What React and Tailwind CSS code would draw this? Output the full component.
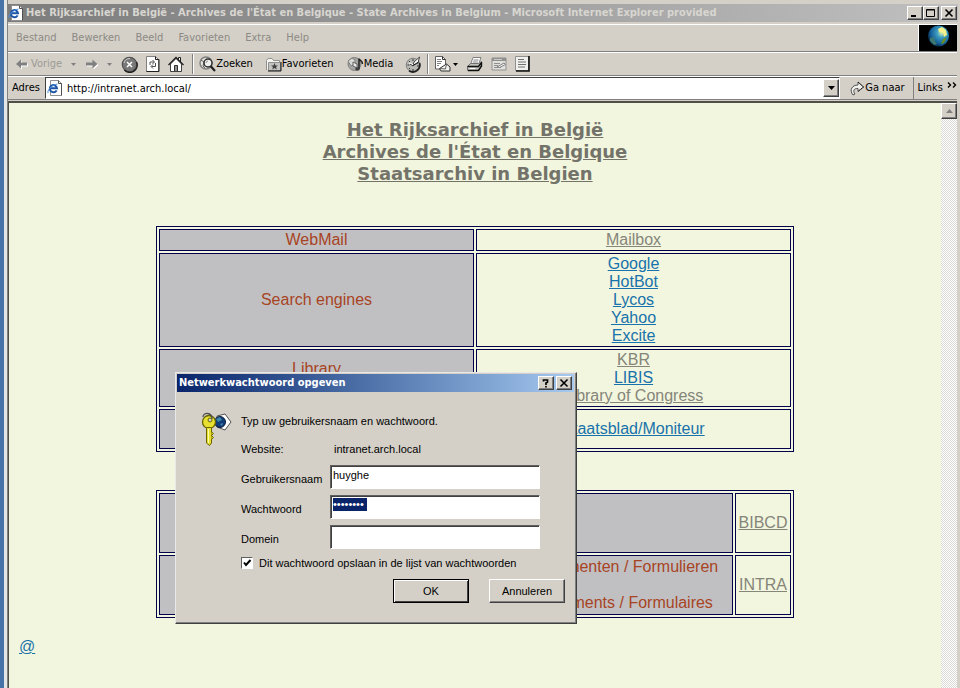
const uiFont = "font-['DejaVu_Sans_Condensed','DejaVu_Sans',sans-serif]";

function PageIcon() {
  return (
    <svg width="16" height="16" viewBox="0 0 16 16" className="shrink-0" aria-hidden="true">
      <path d="M3.500 .5h8l3 3v12h-11z" fill="#fff" stroke="#909090" />
      <path d="M11.500 .5v3h3v12" fill="none" stroke="#505050" />
      <path d="M9.600 10.400A3.600 3.600 0 1 1 10 8.300H4" fill="none" stroke="#1c55a8" strokeWidth="2" />
      <path d="M1 13C0 11 4 5 10.500 4" fill="none" stroke="#4a8fd8" />
    </svg>
  );
}

function BackIcon() {
  return (
    <svg width="14" height="12" viewBox="0 0 14 12" aria-hidden="true">
      <path d="M2 7l5-4.500v3h6v3H7v3z" fill="#fff" />
      <path d="M1 6l5-4.500v3h6v3H6v3z" fill="#808080" />
    </svg>
  );
}

function ForwardIcon() {
  return (
    <svg width="14" height="12" viewBox="0 0 14 12" aria-hidden="true">
      <path d="M13.500 7l-5-4.500V5.500H2v3h6.500v3z" fill="#fff" />
      <path d="M12.500 6l-5-4.500V4.500H1v3h6.500v3z" fill="#808080" />
    </svg>
  );
}

function Caret({ color = "#000" }) {
  return (
    <svg width="5" height="3" viewBox="0 0 5 3" aria-hidden="true">
      <path d="M0 0h5L2.500 3z" fill={color} />
    </svg>
  );
}

function StopIcon() {
  return (
    <svg width="17" height="17" viewBox="0 0 17 17" aria-hidden="true">
      <circle cx="8.500" cy="8.500" r="7.200" fill="#787878" stroke="#505050" strokeWidth="1.200" />
      <path d="M15.500 6A7.300 7.300 0 0 1 3.500 14" stroke="#202020" strokeWidth="1.500" fill="none" />
      <path d="M3 7A6 6 0 0 1 9 2.500" stroke="#d0d0d0" fill="none" />
      <path d="M6 6l5 5M11 6l-5 5" stroke="#fff" strokeWidth="1.500" />
    </svg>
  );
}

function RefreshIcon() {
  return (
    <svg width="14" height="16" viewBox="0 0 14 16" aria-hidden="true">
      <path d="M.5 .5h9l3 3v12H.5z" fill="#fff" stroke="#808080" />
      <path d="M9.500 .5v3h3.500v12H.5" fill="none" stroke="#202020" />
      <path d="M4 9V6h4M6.500 4L8.500 6l-2 2M9.500 7v3.500H5.500M7 8.500l-2 2 2 2" fill="none" stroke="#505050" />
    </svg>
  );
}

function HomeIcon() {
  return (
    <svg width="16" height="16" viewBox="0 0 16 16" aria-hidden="true">
      <path d="M10.500 4V1.500h2V6" fill="#fff" stroke="#202020" />
      <path d="M2.500 8v7.500h11V8L8 2.500z" fill="#fff" stroke="#404040" />
      <path d="M.5 9L8 1.500 15.500 9" fill="none" stroke="#202020" strokeWidth="1.300" />
      <path d="M6.500 15V9.500h3V15" fill="#909090" stroke="#303030" />
    </svg>
  );
}

function SearchIcon() {
  return (
    <svg width="17" height="16" viewBox="0 0 17 16" aria-hidden="true">
      <circle cx="7" cy="7" r="6" fill="#e4e4e0" stroke="#808080" strokeWidth="1.500" />
      <path d="M2 4l3 2-1 4 2 2" fill="none" stroke="#606060" />
      <circle cx="9" cy="7" r="4" fill="#f0f0ee" stroke="#303030" strokeWidth="1.500" />
      <path d="M7 7a2 2 0 0 1 2-2" fill="none" stroke="#909090" />
      <path d="M11.500 10l4.500 5" stroke="#202020" strokeWidth="2.200" />
    </svg>
  );
}

function FavoritesIcon() {
  return (
    <svg width="16" height="15" viewBox="0 0 16 15" aria-hidden="true">
      <path d="M.5 13V3.500l1.500-2h4l1.500 2h6V6" fill="#f4f4f0" stroke="#909090" />
      <path d="M2.500 5.500h12v8h-12z" fill="#c4c4c0" stroke="#909090" />
      <path d="M15 5v9H2" fill="none" stroke="#101010" />
      <path d="M8.500 6l1 2.400H12l-2 1.500.8 2.600-2.300-1.500-2.300 1.500.8-2.600-2-1.500h2.500z" fill="#404040" />
    </svg>
  );
}

function MediaIcon() {
  return (
    <svg width="17" height="16" viewBox="0 0 17 16" aria-hidden="true">
      <circle cx="7.500" cy="8" r="6.500" fill="#a4a4a0" stroke="#808080" />
      <path d="M1 5l4-3 3 2v4l-4 2z" fill="#d8d8d4" stroke="#808080" />
      <path d="M6 6l4 2v4l-4-2z" fill="#ececec" stroke="#606060" />
      <path d="M12 13V2.500c0 2 3.500 1.500 3.500 5.500" fill="none" stroke="#202020" strokeWidth="1.500" />
      <ellipse cx="10.500" cy="13" rx="2.300" ry="1.800" fill="#404040" />
    </svg>
  );
}

function HistoryIcon() {
  return (
    <svg width="17" height="17" viewBox="0 0 17 17" aria-hidden="true">
      <circle cx="8" cy="9" r="6.800" fill="#b8b8b4" stroke="#808080" />
      <path d="M14.500 7A7 7 0 0 1 4 14.800" stroke="#202020" strokeWidth="1.800" fill="none" />
      <path d="M8 3v2M2.500 9h2M8 13v2M12 10h2M4 5l1 1M4 13l1-1" stroke="#303030" />
      <path d="M8 9.500l1-3.500 5.500-5-1.500 6z" fill="#fff" stroke="#404040" />
      <path d="M8 9.500L4.500 7" stroke="#fff" strokeWidth="2" />
      <path d="M8 9.500l5.500-3.500M8 10L5 8" stroke="#202020" fill="none" />
    </svg>
  );
}

function MailIcon() {
  return (
    <svg width="17" height="16" viewBox="0 0 17 16" aria-hidden="true">
      <path d="M1.500 .5h7l3 3v9.500h-10z" fill="#fff" stroke="#606060" />
      <path d="M8.500 .5v3h3" fill="none" stroke="#303030" />
      <path d="M3 3.500h4M3 5.500h5M3 7.500h4M3 9.500h2" stroke="#808080" />
      <path d="M5.500 12.500l7-4.500 3.500 3v4h-9z" fill="#f4f4f0" stroke="#303030" />
      <path d="M5.500 12.500l6 .5 1-5" fill="none" stroke="#606060" />
    </svg>
  );
}

function PrintIcon() {
  return (
    <svg width="17" height="15" viewBox="0 0 17 15" aria-hidden="true">
      <path d="M4.500 7.500l2.500-7h8l-2.500 7z" fill="#fff" stroke="#808080" />
      <path d="M7.500 3h5M6.800 5h5" stroke="#808080" />
      <path d="M1.500 9.500l3-3h8l3-2v4l-3 5h-11z" fill="#c0c0bc" stroke="#707070" />
      <path d="M1.500 9.500h11l3-4M12.500 13.500l3-4.500V5M2 13.500h10.500" fill="none" stroke="#101010" strokeWidth="1.400" />
      <path d="M3.500 11.500h6" stroke="#fff" />
    </svg>
  );
}

function EditIcon() {
  return (
    <svg width="16" height="14" viewBox="0 0 16 14" aria-hidden="true">
      <path d="M1 1h14v12H1z" fill="#e0e0dc" stroke="#909090" />
      <path d="M1 1h14v3H1z" fill="#909090" />
      <path d="M3 2.500h8" stroke="#c8c8c4" />
      <path d="M3 6.500h6M3 8.500h4M3 10.500h7" stroke="#909090" />
      <path d="M6 10l7-4 1.500 1.500-6 3z" fill="#f4f4f4" stroke="#808080" />
    </svg>
  );
}

function DiscussIcon() {
  return (
    <svg width="15" height="16" viewBox="0 0 15 16" aria-hidden="true">
      <path d="M.5 .5h13v14H.5z" fill="#f0f0ec" stroke="#909090" />
      <path d="M14 0v15H1" fill="none" stroke="#101010" strokeWidth="1.600" />
      <path d="M3 3.500h6M3 6h8M3 8.500h8M3 11h7" stroke="#707070" />
    </svg>
  );
}

function GoIcon() {
  return (
    <svg width="15" height="15" viewBox="0 0 15 15" aria-hidden="true">
      <path d="M3 14C-1 9 2 4 8 4V1l5.500 5L8 10.500V7.500C4 7 2.500 10 5 13z" fill="#f0f0ec" stroke="#505050" />
      <path d="M8 1l5.500 5L8 10.500" fill="none" stroke="#101010" strokeDasharray="2 1" />
    </svg>
  );
}

function GlobeLogo() {
  return (
    <svg width="38" height="26" viewBox="0 0 38 26" aria-hidden="true">
      <defs>
        <radialGradient id="globe" cx=".65" cy=".35" r=".75">
          <stop offset="0" stopColor="#d8f0b0" />
          <stop offset=".3" stopColor="#3c9cc0" />
          <stop offset=".7" stopColor="#145c98" />
          <stop offset="1" stopColor="#041828" />
        </radialGradient>
      </defs>
      <path d="M0 0h38v26H0z" fill="#000" />
      <circle cx="19.500" cy="11" r="10.500" fill="url(#globe)" />
      <path d="M19 4l4-2 4 3 1 5-3 2-1-4-4-1z" fill="#f4f08c" />
      <path d="M11 13l4-1 1 4 2 3-3 1-4-4z" fill="#3c7870" />
      <path d="M24 14l4-2-3 6-3 1z" fill="#6c8c28" />
    </svg>
  );
}

function KeyIcon() {
  return (
    <svg width="32" height="36" viewBox="0 0 32 36" className="shrink-0" aria-hidden="true">
      <path d="M16 4l8-2 6 8-6 8-8-3z" fill="#fff" stroke="#505050" />
      <circle cx="19" cy="10" r="5.500" fill="#123c78" stroke="#0c1c3c" />
      <path d="M15 7l4-2 2 3-4 2zM19 12l3-1-1 3z" fill="#3c88a8" />
      <circle cx="8" cy="10" r="6.500" fill="#e8e030" stroke="#686400" strokeWidth="1.300" />
      <path d="M5.500 15.500h5V31l-2 2.500-3-2.500z" fill="#e8e030" stroke="#686400" />
      <path d="M10.500 20l2 1.500-2 2 2 2-2 2" fill="#e8e030" stroke="#686400" />
      <path d="M7.500 17v14" stroke="#fffcb0" />
      <circle cx="9" cy="8" r="2" fill="#d4d0c8" stroke="#686400" />
      <path d="M2 5c0-5 9-5 9 2" fill="none" stroke="#505050" strokeWidth="1.300" />
    </svg>
  );
}

const raised =
  "border border-t-white border-l-white border-r-[#404040] border-b-[#404040] shadow-[inset_-1px_-1px_0_#808080] bg-[#d4d0c8]";

function CaptionButton({ label, children }) {
  return (
    <button type="button" aria-label={label} className={`flex h-[14px] w-4 items-center justify-center ${raised}`}>
      <svg width="10" height="10" viewBox="0 0 10 10" fill="none" stroke="#000" aria-hidden="true">
        {children}
      </svg>
    </button>
  );
}

function ToolSeparator() {
  return <span className="h-5 w-[2px] border-l border-[#808080] border-r border-r-white" />;
}

function PageLink({ visited, children }) {
  return (
    <a href="#" className={visited ? "text-[#85857a] underline" : "text-[#1872ab] underline"}>
      {children}
    </a>
  );
}

const cell = "border border-[#00004c] p-px text-center align-middle";
const head = "border border-[#00004c] bg-[#c0c0c3] p-px text-center align-middle font-normal text-[#a84424]";
const tableFrame =
  "mx-auto w-[638px] max-w-full table-fixed border-separate border-spacing-[2px] border border-[#00004c] text-[16px] leading-[18px]";
const field =
  "h-6 w-full border border-t-[#606060] border-l-[#606060] border-r-white border-b-white bg-white shadow-[inset_1px_1px_0_#404040] outline-none";

function PasswordDialog() {
  return (
    <form
      role="dialog"
      aria-labelledby="dialog-title"
      onSubmit={(e) => e.preventDefault()}
      className="absolute top-[269px] left-[166px] w-[402px] border border-t-[#e8e8e8] border-l-[#e8e8e8] border-r-[#404040] border-b-[#404040] bg-[#d4d0c8] p-px pb-5 font-['Liberation_Sans',sans-serif] text-[11px] leading-[14px] text-black shadow-[inset_-1px_-1px_0_#808080]"
    >
      <div className="mr-px flex h-[18px] items-center bg-gradient-to-r from-[#0a246a] to-[#a6caf0] pr-[2px] pl-[2px]">
        <h2 id="dialog-title" className={`flex-1 text-[11px] font-bold text-white ${uiFont}`}>
          Netwerkwachtwoord opgeven
        </h2>
        <div className="flex gap-[2px]">
          <CaptionButton label="Help">
            <path d="M2.500 3.500V2h4v2L5 5v2M5 8v1.500" strokeWidth="1.700" />
          </CaptionButton>
          <CaptionButton label="Sluiten">
            <path d="M1.500 1.500l7 7M8.500 1.500l-7 7" strokeWidth="1.600" />
          </CaptionButton>
        </div>
      </div>
      <div className="flex gap-2 pt-5 pr-[35px] pl-6">
        <KeyIcon />
        <div className="flex-1">
          <p className="pt-[2px]">Typ uw gebruikersnaam en wachtwoord.</p>
          <div className="grid grid-cols-[90px_1fr] pt-[14px]">
            <span>Website:</span>
            <span className="pl-[3px]">intranet.arch.local</span>
          </div>
          <div className="grid grid-cols-[89px_1fr] items-center gap-y-[6px] pt-[9px]">
            <label htmlFor="user" className="pt-1">Gebruikersnaam</label>
            <input id="user" defaultValue="huyghe" className={`${field} px-[2px] pb-1`} />
            <label htmlFor="pass" className="pt-1">Wachtwoord</label>
            <input
              id="pass"
              type="password"
              defaultValue="wachtwrd"
              className={`${field} bg-[linear-gradient(#0a246a,#0a246a)] bg-[length:34px_13px] bg-[position:2px_2px] bg-no-repeat px-[2px] pb-[6px] text-white`}
            />
            <label htmlFor="domain" className="pt-1">Domein</label>
            <input id="domain" className={`${field} px-[2px]`} />
          </div>
          <label className="flex items-center gap-[6px] pt-[7px]">
            <span className="grid">
              <input
                type="checkbox"
                defaultChecked
                className="col-start-1 row-start-1 size-3 appearance-none border border-t-[#606060] border-l-[#606060] border-r-white border-b-white bg-white"
              />
              <svg className="pointer-events-none col-start-1 row-start-1 size-3" viewBox="0 0 12 12" aria-hidden="true">
                <path d="M3 5.500l2 2.500 4.500-5" fill="none" stroke="#000" strokeWidth="2" />
              </svg>
            </span>
            Dit wachtwoord opslaan in de lijst van wachtwoorden
          </label>
        </div>
      </div>
      <div className="flex justify-end gap-5 pt-[9px] pr-[10px]">
        <button type="submit" className="h-6 w-[76px] border border-black bg-[#d4d0c8] shadow-[inset_1px_1px_0_#fff,inset_-1px_-1px_0_#404040]">
          OK
        </button>
        <button type="button" className={`h-6 w-[76px] ${raised}`}>
          Annuleren
        </button>
      </div>
    </form>
  );
}

export default function App() {
  return (
    <div className="flex h-screen overflow-hidden bg-[#d4d0c8] text-black">
      <div className="w-1 shrink-0 bg-[#4674a8]" />
      <div className="w-[3px] shrink-0 bg-[#e4e6e6]" />
      <div className={`flex min-w-0 flex-1 flex-col border-l border-[#808080] pt-1 text-[11px] leading-[14px] ${uiFont}`}>
        <header className="mr-[2px] flex h-[18px] items-center gap-[2px] bg-gradient-to-r from-[#7c7c7c] to-[#c0c0c0] pr-px">
          <PageIcon />
          <h1 className="min-w-0 flex-1 truncate text-[11px] font-bold text-[#d8d6d0]">
            Het Rijksarchief in België - Archives de l'État en Belgique - State Archives in Belgium - Microsoft Internet Explorer provided
          </h1>
          <div className="flex">
            <CaptionButton label="Minimaliseren">
              <path d="M1 8h5" strokeWidth="2" />
            </CaptionButton>
            <CaptionButton label="Maximaliseren">
              <path d="M.5 1.500h8v7h-8zM.5 2h8" />
            </CaptionButton>
            <span className="w-[2px]" />
            <CaptionButton label="Sluiten">
              <path d="M1.500 1.500l7 7M8.500 1.500l-7 7" strokeWidth="1.600" />
            </CaptionButton>
          </div>
        </header>

        <div className="mt-[2px] mr-[3px] flex h-[28px] items-stretch justify-between border-t border-b border-t-white border-b-[#808080]">
          <nav className="flex items-center gap-[15px] pl-2 text-[#8c8a84]">
            <a href="#">Bestand</a>
            <a href="#">Bewerken</a>
            <a href="#">Beeld</a>
            <a href="#">Favorieten</a>
            <a href="#">Extra</a>
            <a href="#">Help</a>
          </nav>
          <div className="border-l border-white">
            <GlobeLogo />
          </div>
        </div>

        <div className="mr-[3px] flex h-6 items-center border-t border-b border-t-white border-b-[#808080] pl-[7px]">
          <button type="button" className="flex items-center gap-[2px] text-[#9c9a94]">
            <BackIcon /> Vorige
          </button>
          <span className="ml-[9px]"><Caret color="#808080" /></span>
          <button type="button" aria-label="Volgende" className="ml-[9px] flex items-center gap-2">
            <ForwardIcon /> <Caret color="#808080" />
          </button>
          <div className="ml-[9px] flex items-center gap-2">
            <button type="button" aria-label="Stoppen"><StopIcon /></button>
            <button type="button" aria-label="Vernieuwen"><RefreshIcon /></button>
            <button type="button" aria-label="Startpagina"><HomeIcon /></button>
          </div>
          <span className="ml-2 flex"><ToolSeparator /></span>
          <button type="button" className="ml-[5px] flex items-center"><SearchIcon /> Zoeken</button>
          <button type="button" className="ml-[13px] flex items-center"><FavoritesIcon /> Favorieten</button>
          <button type="button" className="ml-[13px] flex items-center"><MediaIcon /> Media</button>
          <button type="button" aria-label="Geschiedenis" className="ml-3"><HistoryIcon /></button>
          <span className="ml-[5px] flex"><ToolSeparator /></span>
          <div className="ml-[5px] flex items-center gap-2">
            <button type="button" aria-label="E-mail" className="flex items-center gap-[2px]"><MailIcon /> <Caret /></button>
            <button type="button" aria-label="Afdrukken"><PrintIcon /></button>
            <button type="button" aria-label="Bewerken"><EditIcon /></button>
            <button type="button" aria-label="Discussiëren"><DiscussIcon /></button>
          </div>
        </div>

        <div className="mr-[3px] flex h-6 items-center border-t border-b border-t-white border-b-[#808080] pl-1">
          <label htmlFor="address">Adres</label>
          <div className="ml-[5px] flex h-[22px] flex-1 items-center border border-t-[#404040] border-l-[#404040] border-r-white border-b-white bg-white pl-px">
            <PageIcon />
            <input id="address" defaultValue="http://intranet.arch.local/" className="min-w-0 flex-1 pt-[2px] pl-1 outline-none" />
            <button type="button" aria-label="Adressen" className={`flex h-[18px] w-4 items-center justify-center ${raised}`}>
              <svg width="7" height="4" viewBox="0 0 7 4" aria-hidden="true">
                <path d="M0 0h7L3.500 4z" />
              </svg>
            </button>
          </div>
          <button type="button" className="ml-[10px] flex items-center"><GoIcon /> Ga naar</button>
          <button type="button" className="ml-2 flex h-full items-center gap-1 border-l border-[#808080] pl-1">
            Links
            <svg width="10" height="6" viewBox="0 0 10 6" className="mb-[7px]" fill="none" stroke="#000" strokeWidth="1.400" aria-hidden="true">
              <path d="M1 .5L3.500 3 1 5.500M6 .5L8.500 3 6 5.500" />
            </svg>
          </button>
        </div>

        <div className="mt-px mr-[3px] flex min-h-0 flex-1 border-t-2 border-l border-[#505048]">
          <main className="relative min-w-0 flex-1 bg-[#f2f6de] font-['Liberation_Sans',sans-serif] text-[16px] leading-[18px]">
            <h2 className="pt-4 text-center font-['DejaVu_Sans',sans-serif] text-[18px] leading-[22px] font-bold text-[#73736a] underline">
              Het Rijksarchief in België
              <br />
              Archives de l'État en Belgique
              <br />
              Staatsarchiv in Belgien
            </h2>
            <table className={`mt-[41px] ${tableFrame}`}>
              <tbody>
                <tr>
                  <th className={head}>WebMail</th>
                  <td className={cell}><PageLink visited>Mailbox</PageLink></td>
                </tr>
                <tr>
                  <th className={head}>Search engines</th>
                  <td className={cell}>
                    <PageLink>Google</PageLink><br />
                    <PageLink>HotBot</PageLink><br />
                    <PageLink>Lycos</PageLink><br />
                    <PageLink>Yahoo</PageLink><br />
                    <PageLink>Excite</PageLink>
                  </td>
                </tr>
                <tr>
                  <th className={head}>Library<br /><br /></th>
                  <td className={cell}>
                    <PageLink visited>KBR</PageLink><br />
                    <PageLink>LIBIS</PageLink><br />
                    <PageLink visited>Library of Congress</PageLink>
                  </td>
                </tr>
                <tr>
                  <th className={head} />
                  <td className={`h-10 ${cell}`}><PageLink>Staatsblad/Moniteur</PageLink></td>
                </tr>
              </tbody>
            </table>
            <table className={`mt-[38px] ${tableFrame}`}>
              <colgroup>
                <col />
                <col className="w-14" />
              </colgroup>
              <tbody>
                <tr>
                  <th className={`h-[60px] ${head}`} />
                  <td className={cell}><PageLink visited>BIBCD</PageLink></td>
                </tr>
                <tr>
                  <th className={`h-[60px] pl-[356px] ${head}`}>
                    Documenten / Formulieren<br /><br />Documents / Formulaires
                  </th>
                  <td className={cell}><PageLink visited>INTRA</PageLink></td>
                </tr>
              </tbody>
            </table>
            <p className="pt-5 pl-[10px]"><PageLink>@</PageLink></p>
            <PasswordDialog />
          </main>
          <div className="w-4 shrink-0 bg-[#f0f0ee] bg-[conic-gradient(#fff_25%,#dcdad6_0_50%,#fff_0_75%,#dcdad6_0)] bg-[length:2px_2px]">
            <button type="button" aria-label="Omhoog schuiven" className={`flex size-4 items-center justify-center ${raised}`}>
              <svg width="7" height="4" viewBox="0 0 7 4" aria-hidden="true">
                <path d="M0 4h7L3.500 0z" fill="#808080" />
              </svg>
            </button>
          </div>
        </div>
      </div>
    </div>
  );
}
